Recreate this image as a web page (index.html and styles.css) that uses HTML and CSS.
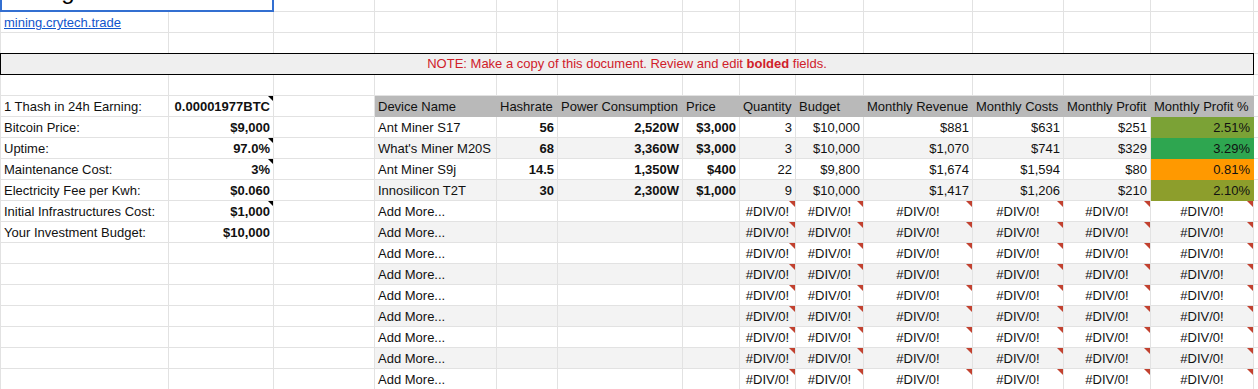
FILE: index.html
```html
<!DOCTYPE html>
<html>
<head>
<meta charset="utf-8">
<link rel="stylesheet" href="styles.css">
</head>
<body>
<div class="sheet">
  <div class="row">
    <div class="c title span2">Mining Calculator</div>
    <div class="c"></div><div class="c"></div><div class="c"></div><div class="c"></div><div class="c"></div><div class="c"></div><div class="c"></div><div class="c"></div><div class="c"></div><div class="c"></div><div class="c"></div><div class="c"></div>
  </div>
  <div class="row">
    <div class="c"><a class="link" href="#">mining.crytech.trade</a></div>
    <div class="c"></div><div class="c"></div><div class="c"></div><div class="c"></div><div class="c"></div><div class="c"></div><div class="c"></div><div class="c"></div><div class="c"></div><div class="c"></div><div class="c"></div><div class="c"></div><div class="c"></div>
  </div>
  <div class="row">
    <div class="c"></div><div class="c"></div><div class="c"></div><div class="c"></div><div class="c"></div><div class="c"></div><div class="c"></div><div class="c"></div><div class="c"></div><div class="c"></div><div class="c"></div><div class="c"></div><div class="c"></div><div class="c"></div>
  </div>
  <div class="row">
    <div class="c note span13">NOTE: Make a copy of this document. Review and edit&nbsp;<b>bolded</b>&nbsp;fields.</div>
    <div class="c"></div>
  </div>
  <div class="row">
    <div class="c"></div><div class="c"></div><div class="c"></div><div class="c"></div><div class="c"></div><div class="c"></div><div class="c"></div><div class="c"></div><div class="c"></div><div class="c"></div><div class="c"></div><div class="c"></div><div class="c"></div><div class="c"></div>
  </div>

  <div class="row hdr">
    <div class="c">1 Thash in 24h Earning:</div>
    <div class="c r b cm">0.00001977BTC</div>
    <div class="c"></div>
    <div class="c">Device Name</div>
    <div class="c">Hashrate</div>
    <div class="c">Power Consumption</div>
    <div class="c">Price</div>
    <div class="c">Quantity</div>
    <div class="c">Budget</div>
    <div class="c">Monthly Revenue</div>
    <div class="c">Monthly Costs</div>
    <div class="c">Monthly Profit</div>
    <div class="c">Monthly Profit %</div>
    <div class="c"></div>
  </div>

  <div class="row">
    <div class="c">Bitcoin Price:</div>
    <div class="c r b">$9,000</div>
    <div class="c"></div>
    <div class="c">Ant Miner S17</div>
    <div class="c r b">56</div>
    <div class="c r b">2,520W</div>
    <div class="c r b">$3,000</div>
    <div class="c r">3</div>
    <div class="c r">$10,000</div>
    <div class="c r">$881</div>
    <div class="c r">$631</div>
    <div class="c r">$251</div>
    <div class="c r pct p-olive">2.51%</div>
    <div class="c"></div>
  </div>

  <div class="row alt">
    <div class="c">Uptime:</div>
    <div class="c r b cm">97.0%</div>
    <div class="c"></div>
    <div class="c">What's Miner M20S</div>
    <div class="c r b">68</div>
    <div class="c r b">3,360W</div>
    <div class="c r b">$3,000</div>
    <div class="c r">3</div>
    <div class="c r">$10,000</div>
    <div class="c r">$1,070</div>
    <div class="c r">$741</div>
    <div class="c r">$329</div>
    <div class="c r pct p-green">3.29%</div>
    <div class="c"></div>
  </div>

  <div class="row">
    <div class="c">Maintenance Cost:</div>
    <div class="c r b cm">3%</div>
    <div class="c"></div>
    <div class="c">Ant Miner S9j</div>
    <div class="c r b">14.5</div>
    <div class="c r b">1,350W</div>
    <div class="c r b">$400</div>
    <div class="c r">22</div>
    <div class="c r">$9,800</div>
    <div class="c r">$1,674</div>
    <div class="c r">$1,594</div>
    <div class="c r">$80</div>
    <div class="c r pct p-orange">0.81%</div>
    <div class="c"></div>
  </div>

  <div class="row alt">
    <div class="c">Electricity Fee per Kwh:</div>
    <div class="c r b">$0.060</div>
    <div class="c"></div>
    <div class="c">Innosilicon T2T</div>
    <div class="c r b">30</div>
    <div class="c r b">2,300W</div>
    <div class="c r b">$1,000</div>
    <div class="c r">9</div>
    <div class="c r">$10,000</div>
    <div class="c r">$1,417</div>
    <div class="c r">$1,206</div>
    <div class="c r">$210</div>
    <div class="c r pct p-olive2">2.10%</div>
    <div class="c"></div>
  </div>

  <div class="row">
    <div class="c">Initial Infrastructures Cost:</div>
    <div class="c r b cm">$1,000</div>
    <div class="c"></div>
    <div class="c">Add More...</div>
    <div class="c"></div><div class="c"></div><div class="c"></div>
    <div class="c m er">#DIV/0!</div><div class="c m er">#DIV/0!</div><div class="c m er">#DIV/0!</div><div class="c m er">#DIV/0!</div><div class="c m er">#DIV/0!</div><div class="c m er">#DIV/0!</div>
    <div class="c"></div>
  </div>

  <div class="row alt">
    <div class="c">Your Investment Budget:</div>
    <div class="c r b">$10,000</div>
    <div class="c"></div>
    <div class="c">Add More...</div>
    <div class="c"></div><div class="c"></div><div class="c"></div>
    <div class="c m er">#DIV/0!</div><div class="c m er">#DIV/0!</div><div class="c m er">#DIV/0!</div><div class="c m er">#DIV/0!</div><div class="c m er">#DIV/0!</div><div class="c m er">#DIV/0!</div>
    <div class="c"></div>
  </div>

  <div class="row">
    <div class="c"></div><div class="c"></div><div class="c"></div>
    <div class="c">Add More...</div>
    <div class="c"></div><div class="c"></div><div class="c"></div>
    <div class="c m er">#DIV/0!</div><div class="c m er">#DIV/0!</div><div class="c m er">#DIV/0!</div><div class="c m er">#DIV/0!</div><div class="c m er">#DIV/0!</div><div class="c m er">#DIV/0!</div>
    <div class="c"></div>
  </div>

  <div class="row alt">
    <div class="c"></div><div class="c"></div><div class="c"></div>
    <div class="c">Add More...</div>
    <div class="c"></div><div class="c"></div><div class="c"></div>
    <div class="c m er">#DIV/0!</div><div class="c m er">#DIV/0!</div><div class="c m er">#DIV/0!</div><div class="c m er">#DIV/0!</div><div class="c m er">#DIV/0!</div><div class="c m er">#DIV/0!</div>
    <div class="c"></div>
  </div>

  <div class="row">
    <div class="c"></div><div class="c"></div><div class="c"></div>
    <div class="c">Add More...</div>
    <div class="c"></div><div class="c"></div><div class="c"></div>
    <div class="c m er">#DIV/0!</div><div class="c m er">#DIV/0!</div><div class="c m er">#DIV/0!</div><div class="c m er">#DIV/0!</div><div class="c m er">#DIV/0!</div><div class="c m er">#DIV/0!</div>
    <div class="c"></div>
  </div>

  <div class="row alt">
    <div class="c"></div><div class="c"></div><div class="c"></div>
    <div class="c">Add More...</div>
    <div class="c"></div><div class="c"></div><div class="c"></div>
    <div class="c m er">#DIV/0!</div><div class="c m er">#DIV/0!</div><div class="c m er">#DIV/0!</div><div class="c m er">#DIV/0!</div><div class="c m er">#DIV/0!</div><div class="c m er">#DIV/0!</div>
    <div class="c"></div>
  </div>

  <div class="row">
    <div class="c"></div><div class="c"></div><div class="c"></div>
    <div class="c">Add More...</div>
    <div class="c"></div><div class="c"></div><div class="c"></div>
    <div class="c m er">#DIV/0!</div><div class="c m er">#DIV/0!</div><div class="c m er">#DIV/0!</div><div class="c m er">#DIV/0!</div><div class="c m er">#DIV/0!</div><div class="c m er">#DIV/0!</div>
    <div class="c"></div>
  </div>

  <div class="row alt">
    <div class="c"></div><div class="c"></div><div class="c"></div>
    <div class="c">Add More...</div>
    <div class="c"></div><div class="c"></div><div class="c"></div>
    <div class="c m er">#DIV/0!</div><div class="c m er">#DIV/0!</div><div class="c m er">#DIV/0!</div><div class="c m er">#DIV/0!</div><div class="c m er">#DIV/0!</div><div class="c m er">#DIV/0!</div>
    <div class="c"></div>
  </div>

  <div class="row">
    <div class="c"></div><div class="c"></div><div class="c"></div>
    <div class="c">Add More...</div>
    <div class="c"></div><div class="c"></div><div class="c"></div>
    <div class="c m er">#DIV/0!</div><div class="c m er">#DIV/0!</div><div class="c m er">#DIV/0!</div><div class="c m er">#DIV/0!</div><div class="c m er">#DIV/0!</div><div class="c m er">#DIV/0!</div>
    <div class="c"></div>
  </div>
</div>
</body>
</html>
```

FILE: styles.css
```css
html, body {
  margin: 0;
  padding: 0;
  background: #ffffff;
  overflow: hidden;
}

body {
  font-family: "Liberation Sans", Arial, sans-serif;
  font-size: 13px;
  color: #111111;
}

.sheet {
  margin-top: -9px;
}

.row {
  display: grid;
  grid-template-columns: 169px 105px 101px 122px 61px 125px 57px 56px 68px 109px 91px 87px 103px 1fr;
  height: 21px;
}

.c {
  position: relative;
  box-sizing: border-box;
  display: flex;
  align-items: flex-end;
  justify-content: flex-start;
  padding: 0 3px 2px 3px;
  line-height: 15px;
  white-space: nowrap;
  border-right: 1px solid #e2e2e2;
  border-bottom: 1px solid #e2e2e2;
  min-width: 0;
}

.row > .c:first-child {
  border-left: 1px solid #e2e2e2;
}

.span2 { grid-column: span 2; }
.span13 { grid-column: span 13; }

.r { justify-content: flex-end; }
.m { justify-content: center; }
.b { font-weight: bold; }

.title {
  border: 2px solid #336fd1 !important;
  font-size: 24px;
  line-height: 28px;
  padding: 0 3px 5px 2px;
  overflow: hidden;
  color: #000;
}

.link {
  color: #1155cc;
  text-decoration: underline;
}

.note {
  margin-top: -1px;
  border: 1px solid #000 !important;
  background: #efefef;
  justify-content: center;
  color: #d0202a;
  padding-bottom: 3px;
}

.note b { font-weight: bold; }

/* header band */
.hdr > .c:nth-child(n+4):nth-child(-n+13) {
  background: #b9b9b9;
  border-color: #b9b9b9;
}

/* alternating band */
.alt > .c:nth-child(n+4):nth-child(-n+13) {
  background: #f3f3f3;
}

.pct { border-color: transparent !important; }
.p-olive { background: #7ba236 !important; border-bottom-color: #7ba236 !important; }
.p-green { background: #2ea650 !important; border-bottom-color: #2ea650 !important; }
.p-orange { background: #ff9900 !important; border-bottom-color: #ff9900 !important; }
.p-olive2 { background: #8d9e2c !important; border-bottom-color: #8d9e2c !important; }

/* comment marker */
.cm::after {
  content: "";
  position: absolute;
  top: 0;
  right: 0;
  width: 0;
  height: 0;
  border-top: 5px solid #000;
  border-left: 5px solid transparent;
}

/* error marker */
.er::after {
  content: "";
  position: absolute;
  top: 0;
  right: 0;
  width: 0;
  height: 0;
  border-top: 6px solid #c2412f;
  border-left: 6px solid transparent;
}
```
